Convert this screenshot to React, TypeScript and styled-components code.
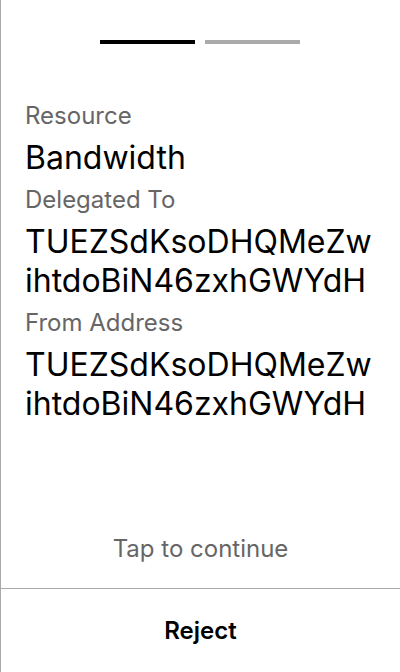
import React from "react";
import styled, { createGlobalStyle } from "styled-components";

const GlobalStyle = createGlobalStyle`
  html, body { margin: 0; padding: 0; background: #fff; }
  body { font-family: Inter, "Noto Sans", sans-serif; }
  * { box-sizing: border-box; }
`;

const Screen = styled.div`
  height: 672px;
  border-left: 1px solid #aaaaaa;
  display: flex;
  flex-direction: column;
  background: #fff;
`;

const Progress = styled.div`
  display: flex;
  justify-content: center;
  gap: 10px;
  padding: 40px 1px 0 0;
`;

const Segment = styled.div<{ $active?: boolean }>`
  width: 95px;
  height: 4px;
  background: ${(p) => (p.$active ? "#000" : "#aaaaaa")};
`;

const Details = styled.div`
  padding: 57px 24px 0;
  display: flex;
  flex-direction: column;
  gap: 8px;
`;

const Label = styled.div`
  font-size: 24px;
  line-height: 29px;
  color: #666666;
`;

const Value = styled.div`
  font-size: 32px;
  line-height: 39px;
  color: #000;
  word-break: break-all;
`;

const Hint = styled.div`
  margin-top: auto;
  padding-bottom: 25px;
  text-align: center;
  font-size: 24px;
  line-height: 29px;
  color: #666666;
`;

const Footer = styled.div`
  height: 84px;
  border-top: 1px solid #aaaaaa;
  display: flex;
  align-items: center;
  justify-content: center;
`;

const RejectButton = styled.button`
  background: none;
  border: none;
  padding: 0;
  font-family: Inter, "Noto Sans", sans-serif;
  font-size: 24px;
  line-height: 29px;
  font-weight: 600;
  color: #000;
  cursor: pointer;
`;

const rows = [
  { label: "Resource", value: "Bandwidth" },
  { label: "Delegated To", value: "TUEZSdKsoDHQMeZwihtdoBiN46zxhGWYdH" },
  { label: "From Address", value: "TUEZSdKsoDHQMeZwihtdoBiN46zxhGWYdH" },
];

export default function App() {
  return (
    <>
      <GlobalStyle />
      <Screen>
        <Progress>
          <Segment $active />
          <Segment />
        </Progress>
        <Details>
          {rows.map((r) => (
            <React.Fragment key={r.label}>
              <Label>{r.label}</Label>
              <Value>{r.value}</Value>
            </React.Fragment>
          ))}
        </Details>
        <Hint>Tap to continue</Hint>
        <Footer>
          <RejectButton>Reject</RejectButton>
        </Footer>
      </Screen>
    </>
  );
}
